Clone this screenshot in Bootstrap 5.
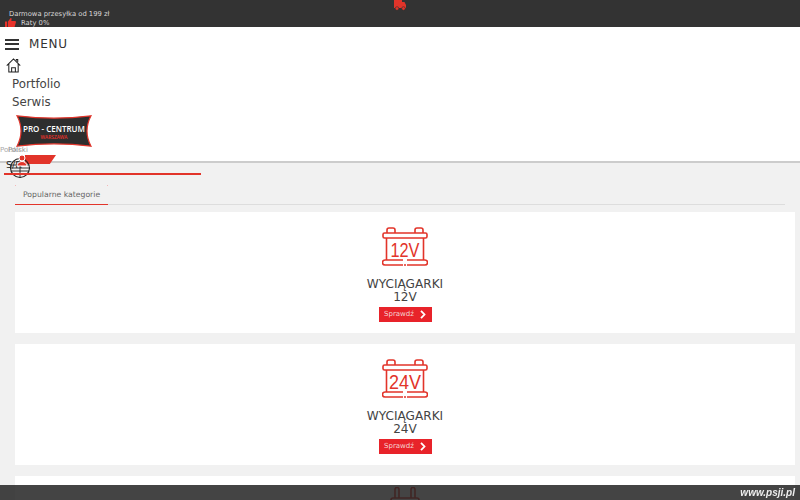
<!DOCTYPE html>
<html lang="pl">
<head>
<meta charset="utf-8">
<title>Pro-Centrum</title>
<link href="https://cdn.jsdelivr.net/npm/bootstrap@5.3.0/dist/css/bootstrap.min.css" rel="stylesheet">
<style>
html,body{height:500px;overflow:hidden}
body{font-family:"DejaVu Sans",sans-serif;background:#f1f1f1;color:#333}
.topbar{height:27px;background:#333;color:#d8d8d8;font-size:6.8px;line-height:9px;position:relative;padding:10px 0 0 9px}
.topbar-raty{padding-left:12px;line-height:8px}
.thumb{position:absolute;left:5px;top:18px}
.truck{position:absolute;left:393px;top:0}
.headbox{height:136px;background:#fff;border-bottom:2px solid #ccc;position:relative}
.menurow{height:34px;padding:0 0 0 5px;gap:10px}
.burger{width:14px;height:11px;border-top:2px solid #333;border-bottom:2px solid #333;position:relative}
.burger::after{content:"";position:absolute;left:0;right:0;top:2.5px;border-top:2px solid #333}
.menutxt{font-size:12px;letter-spacing:.8px;color:#333;line-height:1}
.homelink{padding-left:6px;height:14px;margin-top:-3px;line-height:0}
.navtxt{padding-left:12px;font-size:11.8px;line-height:18px;color:#444}
.navtxt-first{margin-top:3px}
.logobox{padding:4px 0 0 16px;line-height:0}
.logotxt{font-family:"Open Sans",sans-serif;font-weight:600}
.lang{position:absolute;left:0;top:119px;font-size:7px;color:#aaa;line-height:8px}
.lang2{position:absolute;left:8px;top:119px;font-size:7px;color:#999;line-height:8px}
.redtab{position:absolute;left:25px;top:128px;width:31px;height:9px;background:#e2342a;clip-path:polygon(0 0,100% 0,80% 100%,0 100%)}
.sr{position:absolute;left:6px;top:132px;font-size:9.5px;color:#222;line-height:11px}
.globeicon{position:absolute;left:9px;top:130px}
.usericon{position:absolute;left:16px;top:126px}
.redline{height:2px;width:197px;margin:26px 0 0 4px;background:#e2342a;position:relative}
.sect{margin:21px 15px 0 15px}
.sectwrap{border-bottom:1px solid #ddd;height:21px}
.secttab{position:relative;width:93px;height:21px;border-bottom:1.5px solid #e2342a;font-size:7.7px;padding:6px 0 0 8px;color:#666;line-height:10px}
.secttab::before,.secttab::after{content:"";position:absolute;top:1px;width:1px;height:1px;background:#f2b8b8}
.secttab::before{left:0}
.secttab::after{right:0}
.sectcards{margin:7px 5px 0 15px}
.catbox{background:#fff;height:121px;margin-bottom:11px;padding-top:15px}
.caticon{display:block;margin:0 auto}
.cattitle{font-size:12.1px;line-height:13px;color:#444;margin-top:11px}
.catbtn{display:flex;align-items:center;justify-content:center;gap:6px;background:#e8232a;color:#f5d5d5;font-size:7px;height:15px;width:53px;margin:3px auto 0;border-radius:0;padding:0;border:0}
.plugicon{margin-top:-4px}
.overlaybar{position:fixed;left:0;right:0;bottom:0;height:15px;background:rgba(35,35,35,.85);color:#eee;font:italic bold 10px "Liberation Sans",sans-serif;text-align:right;padding-right:5px;line-height:15px}
.pageclip{height:473px;overflow:hidden}
</style>
</head>
<body>
<div class="topbar">
  <div>Darmowa przesyłka od 199 zł</div>
  <div class="topbar-raty">Raty 0%</div>
  <svg class="thumb" width="11" height="9" viewBox="0 0 11 9" aria-hidden="true"><path fill="#e8322a" d="M0 3.5h2.200V9H0zM3 3.500 5.600 0l1.100.6L6.300 3h4.200l.5.9L9.600 9H3z"/></svg>
  <svg class="truck" width="14" height="11" viewBox="0 0 14 11" aria-hidden="true"><path fill="#e2342a" d="M1 0h8v2h2.500L13 5v3H1z"/><circle cx="4" cy="8.500" r="1.800" fill="#e2342a" stroke="#333" stroke-width=".6"/><circle cx="10.500" cy="8.500" r="1.800" fill="#e2342a" stroke="#333" stroke-width=".6"/></svg>
</div>
<div class="pageclip">
<div class="headbox">
  <div class="menurow d-flex align-items-center">
    <span class="burger"></span><span class="menutxt">MENU</span>
  </div>
  <div class="homelink">
    <svg width="15" height="15" viewBox="0 0 16 16" fill="none" stroke="#222" stroke-width="1.100" aria-hidden="true"><path d="M.8 8.200 8 1l7.200 7.200M3 6.500V15h10V6.500M6 15v-4.500h4V15"/><path d="M11 3V1.500h1.500V4.500"/></svg>
  </div>
  <div class="navtxt navtxt-first">Portfolio</div>
  <div class="navtxt">Serwis</div>
  <div class="logobox">
    <svg width="76" height="32" viewBox="0 0 76 32" aria-hidden="true">
      <path fill="#2e2e2e" stroke="#e2342a" stroke-width="1.200" d="M1 .8Q38 5.500 75 .8Q67 16 75 31.200Q38 26.500 1 31.200Q9 16 1 .8z"/>
      <text class="logotxt" x="38" y="17" text-anchor="middle" font-size="8" fill="#fff">PRO - CENTRUM</text>
      <text class="logotxt" x="38" y="23.800" text-anchor="middle" font-size="4.800" font-weight="700" fill="#e8322a">WARSZAWA</text>
    </svg>
  </div>
  <span class="lang">Polski</span><span class="lang2">Polski</span>
  <span class="redtab"></span>
  <span class="sr">S/R</span>
  <svg class="globeicon" width="22" height="22" viewBox="0 0 22 22" fill="none" stroke="#222" aria-hidden="true">
    <circle cx="11" cy="11" r="9.500" stroke-width="1.100"/>
    <path d="M1.500 8h19M1.500 11h19M2 14h18M11 1.500v19" stroke-width=".9"/>
  </svg>
  <svg class="usericon" width="13" height="14" viewBox="0 0 13 14" aria-hidden="true">
    <circle cx="6" cy="5" r="3" fill="#e2342a" stroke="#fff"/>
    <path d="M1 13a5 4.500 0 0 1 10 0z" fill="#e2342a" stroke="#fff"/>
  </svg>
  <div class="redline"></div>
</div>
<div class="sect">
  <div class="sectwrap"><div class="secttab">Popularne kategorie</div></div>
</div>
<div class="sectcards">
  <div class="catbox text-center">
    <svg class="caticon" width="46" height="40" viewBox="0 0 46 40" fill="none" stroke="#e2342a" stroke-width="1.600" aria-hidden="true">
      <path d="M5 6V3a2 2 0 0 1 2-2h4a2 2 0 0 1 2 2v3M33 6V3a2 2 0 0 1 2-2h4a2 2 0 0 1 2 2v3"/>
      <rect x="1" y="6" width="44" height="5" rx="1.500"/>
      <path d="M4.500 11v22M41.500 11v22"/>
      <path d="M3 33h18M25 33h18M3 38h18M25 38h18M3 33a2.500 2.500 0 0 0 0 5M43 33a2.500 2.500 0 0 1 0 5M22 38h2"/>
      <text x="23" y="30" text-anchor="middle" font-size="21" textLength="29" lengthAdjust="spacingAndGlyphs" fill="#e2342a" stroke="none" font-family="Liberation Sans,sans-serif">12V</text>
    </svg>
    <div class="cattitle">WYCIĄGARKI<br>12V</div>
    <button class="btn catbtn" type="button">Sprawdź <svg width="6" height="9" viewBox="0 0 6 9" fill="none" stroke="#fff" stroke-width="1.800" aria-hidden="true"><path d="m1 .8 3.500 3.700L1 8.200"/></svg></button>
  </div>
  <div class="catbox text-center">
    <svg class="caticon" width="46" height="40" viewBox="0 0 46 40" fill="none" stroke="#e2342a" stroke-width="1.600" aria-hidden="true">
      <path d="M5 6V3a2 2 0 0 1 2-2h4a2 2 0 0 1 2 2v3M33 6V3a2 2 0 0 1 2-2h4a2 2 0 0 1 2 2v3"/>
      <rect x="1" y="6" width="44" height="5" rx="1.500"/>
      <path d="M4.500 11v22M41.500 11v22"/>
      <path d="M3 33h18M25 33h18M3 38h18M25 38h18M3 33a2.500 2.500 0 0 0 0 5M43 33a2.500 2.500 0 0 1 0 5M22 38h2"/>
      <text x="23" y="30" text-anchor="middle" font-size="21" textLength="32" lengthAdjust="spacingAndGlyphs" fill="#e2342a" stroke="none" font-family="Liberation Sans,sans-serif">24V</text>
    </svg>
    <div class="cattitle">WYCIĄGARKI<br>24V</div>
    <button class="btn catbtn" type="button">Sprawdź <svg width="6" height="9" viewBox="0 0 6 9" fill="none" stroke="#fff" stroke-width="1.800" aria-hidden="true"><path d="m1 .8 3.500 3.700L1 8.200"/></svg></button>
  </div>
  <div class="catbox text-center">
    <svg class="caticon plugicon" width="46" height="40" viewBox="0 0 46 40" fill="none" stroke="#e2342a" stroke-width="1.600" aria-hidden="true">
      <path d="M13 11V2.500a2 2 0 0 1 4 0V11M29 11V2.500a2 2 0 0 1 4 0V11"/>
      <rect x="9" y="11" width="28" height="5" rx="2"/>
    </svg>
  </div>
</div>
</div>
<div class="overlaybar">www.psji.pl</div>
<script src="https://cdn.jsdelivr.net/npm/bootstrap@5.3.0/dist/js/bootstrap.bundle.min.js"></script>
</body>
</html>
